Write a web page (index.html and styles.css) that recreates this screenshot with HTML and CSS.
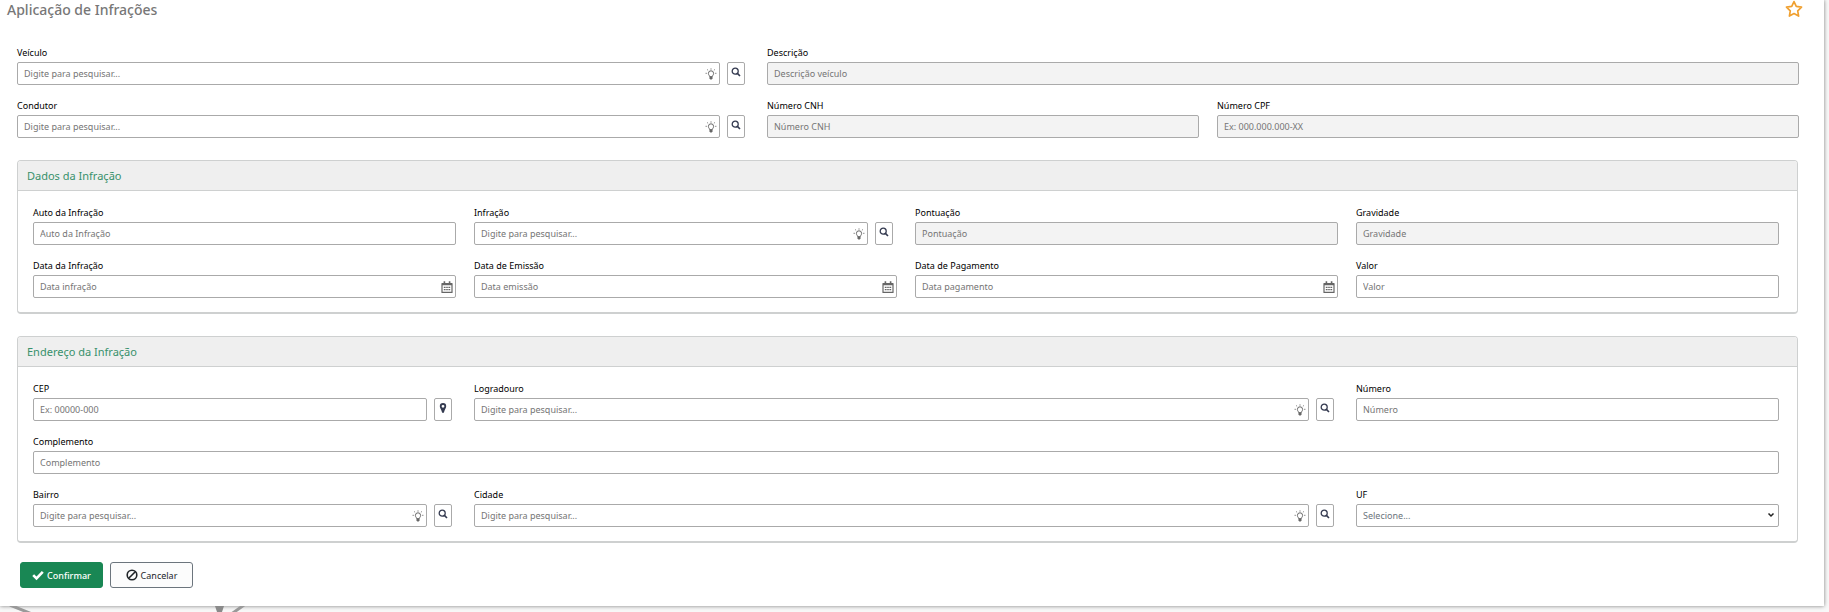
FILE: index.html
```
<!DOCTYPE html>
<html lang="pt-BR">
<head>
<meta charset="utf-8">
<title>Aplicação de Infrações</title>
<link rel="stylesheet" href="styles.css">
</head>
<body>
<!-- icons used more than once -->
<svg class="sprite" aria-hidden="true">
  <symbol id="bulb" viewBox="0 0 12 12">
    <path d="M4.6 8.6C4.6 7.4 3.4 7 3.4 5.4a2.6 2.6 0 0 1 5.2 0c0 1.600-1.200 2-1.200 3.200z" fill="none" stroke="currentColor" stroke-width="1"/>
    <path d="M4.500 9h3v1.600l-.8.9H5.300l-.8-.9z" fill="currentColor"/>
    <path d="M6 .4v1.200M2.200 1.500l.9.9M9.800 1.500l-.9.900M.6 5.300h1.200M10.200 5.300h1.200" stroke="currentColor" stroke-width=".9"/>
  </symbol>
  <symbol id="search" viewBox="0 0 10 10">
    <circle cx="4.200" cy="4.200" r="3" fill="none" stroke="currentColor" stroke-width="1.300"/>
    <path d="M6.400 6.400l2.600 2.600" stroke="currentColor" stroke-width="1.600"/>
  </symbol>
  <symbol id="calendar" viewBox="0 0 12 12">
    <path d="M1 2.500h10v8.900H1z" fill="none" stroke="currentColor" stroke-width="1.200" stroke-linejoin="round"/>
    <path d="M1 2h10v2.200H1zM2.600.2h1.600v2.600H2.600zM7.800.2h1.600v2.600H7.800z" fill="currentColor"/>
    <path d="M2.800 6.400h6.400M2.800 8.600h6.400" stroke="currentColor" stroke-width="1.300" stroke-dasharray="1.300 .4"/>
  </symbol>
</svg>

<main class="card">
  <header class="page-header">
    <h1>Aplicação de Infrações</h1>
    <button class="favorite" type="button" aria-label="Favoritar">
      <svg viewBox="0 0 16 16"><path d="M8 1.400l2 4.300 4.700.6-3.400 3.300.8 4.700L8 12l-4.100 2.300.8-4.700L1.300 6.300 6 5.700z" fill="none" stroke="currentColor" stroke-width="1.500" stroke-linejoin="round"/></svg>
    </button>
  </header>

  <form>
    <div class="row top">
      <div class="field c5">
        <label for="veiculo">Veículo</label>
        <div class="lookup">
          <div class="control"><input id="veiculo" type="text" placeholder="Digite para pesquisar..."><svg><use href="#bulb"/></svg></div>
          <button type="button" aria-label="Pesquisar veículo"><svg><use href="#search"/></svg></button>
        </div>
      </div>
      <div class="field c7">
        <label for="descricao">Descrição</label>
        <input id="descricao" type="text" placeholder="Descrição veículo" disabled>
      </div>
      <div class="field c5">
        <label for="condutor">Condutor</label>
        <div class="lookup">
          <div class="control"><input id="condutor" type="text" placeholder="Digite para pesquisar..."><svg><use href="#bulb"/></svg></div>
          <button type="button" aria-label="Pesquisar condutor"><svg><use href="#search"/></svg></button>
        </div>
      </div>
      <div class="field c3">
        <label for="cnh">Número CNH</label>
        <input id="cnh" type="text" placeholder="Número CNH" disabled>
      </div>
      <div class="field c4">
        <label for="cpf">Número CPF</label>
        <input id="cpf" type="text" placeholder="Ex: 000.000.000-XX" disabled>
      </div>
    </div>

    <section class="panel">
      <h2>Dados da Infração</h2>
      <div class="row">
        <div class="field c3">
          <label for="auto">Auto da Infração</label>
          <input id="auto" type="text" placeholder="Auto da Infração">
        </div>
        <div class="field c3">
          <label for="infracao">Infração</label>
          <div class="lookup">
            <div class="control"><input id="infracao" type="text" placeholder="Digite para pesquisar..."><svg><use href="#bulb"/></svg></div>
            <button type="button" aria-label="Pesquisar infração"><svg><use href="#search"/></svg></button>
          </div>
        </div>
        <div class="field c3">
          <label for="pontuacao">Pontuação</label>
          <input id="pontuacao" type="text" placeholder="Pontuação" disabled>
        </div>
        <div class="field c3">
          <label for="gravidade">Gravidade</label>
          <input id="gravidade" type="text" placeholder="Gravidade" disabled>
        </div>
        <div class="field c3">
          <label for="data-infracao">Data da Infração</label>
          <div class="control date"><input id="data-infracao" type="text" placeholder="Data infração"><svg><use href="#calendar"/></svg></div>
        </div>
        <div class="field c3">
          <label for="data-emissao">Data de Emissão</label>
          <div class="control date"><input id="data-emissao" type="text" placeholder="Data emissão"><svg><use href="#calendar"/></svg></div>
        </div>
        <div class="field c3">
          <label for="data-pagamento">Data de Pagamento</label>
          <div class="control date"><input id="data-pagamento" type="text" placeholder="Data pagamento"><svg><use href="#calendar"/></svg></div>
        </div>
        <div class="field c3">
          <label for="valor">Valor</label>
          <input id="valor" type="text" placeholder="Valor">
        </div>
      </div>
    </section>

    <section class="panel">
      <h2>Endereço da Infração</h2>
      <div class="row">
        <div class="field c3">
          <label for="cep">CEP</label>
          <div class="lookup">
            <div class="control"><input id="cep" type="text" placeholder="Ex: 00000-000"></div>
            <button type="button" aria-label="Localizar CEP"><svg viewBox="0 0 10 10"><path d="M5 0a3.200 3.200 0 0 1 3.200 3.200C8.200 5 6.800 6 6 9.200c-.3 1-1.700 1-2 0C3.200 6 1.800 5 1.800 3.200A3.200 3.200 0 0 1 5 0zm0 1.900a1.400 1.400 0 1 0 0 2.800 1.400 1.400 0 0 0 0-2.800z" fill="currentColor"/></svg></button>
          </div>
        </div>
        <div class="field c6">
          <label for="logradouro">Logradouro</label>
          <div class="lookup">
            <div class="control"><input id="logradouro" type="text" placeholder="Digite para pesquisar..."><svg><use href="#bulb"/></svg></div>
            <button type="button" aria-label="Pesquisar logradouro"><svg><use href="#search"/></svg></button>
          </div>
        </div>
        <div class="field c3">
          <label for="numero">Número</label>
          <input id="numero" type="text" placeholder="Número">
        </div>
        <div class="field c12">
          <label for="complemento">Complemento</label>
          <input id="complemento" type="text" placeholder="Complemento">
        </div>
        <div class="field c3">
          <label for="bairro">Bairro</label>
          <div class="lookup">
            <div class="control"><input id="bairro" type="text" placeholder="Digite para pesquisar..."><svg><use href="#bulb"/></svg></div>
            <button type="button" aria-label="Pesquisar bairro"><svg><use href="#search"/></svg></button>
          </div>
        </div>
        <div class="field c6">
          <label for="cidade">Cidade</label>
          <div class="lookup">
            <div class="control"><input id="cidade" type="text" placeholder="Digite para pesquisar..."><svg><use href="#bulb"/></svg></div>
            <button type="button" aria-label="Pesquisar cidade"><svg><use href="#search"/></svg></button>
          </div>
        </div>
        <div class="field c3">
          <label for="uf">UF</label>
          <div class="control select">
            <select id="uf"><option>Selecione...</option></select>
            <svg viewBox="0 0 8 8"><path d="M1.500 2.500L4 5l2.500-2.500" fill="none" stroke="currentColor" stroke-width="1.500"/></svg>
          </div>
        </div>
      </div>
    </section>

    <div class="actions">
      <button class="btn confirm" type="submit"><svg viewBox="0 0 12 12"><path d="M1.200 6.200l3.300 3.300 6.300-6.600" fill="none" stroke="currentColor" stroke-width="2.600"/></svg>Confirmar</button>
      <button class="btn cancel" type="button"><svg viewBox="0 0 12 12"><circle cx="6" cy="6" r="4.800" fill="none" stroke="currentColor" stroke-width="1.600"/><path d="M2.700 9.300l6.600-6.600" stroke="currentColor" stroke-width="1.600"/></svg>Cancelar</button>
    </div>
  </form>
</main>

<svg class="backdrop" viewBox="0 0 260 6" aria-hidden="true">
  <path d="M10 -1l22 9M244 -1l-14 10" fill="none" stroke="#999" stroke-width="3"/>
  <path d="M215 0h9l-2 6h-5z" fill="#8a8a8a"/>
</svg>
</body>
</html>
```

FILE: styles.css
```
*{box-sizing:border-box;}
body{margin:0; padding:0 5px 0 0; background:#f8f8f8; color:#000; font-family:"Noto Sans", "Open Sans", sans-serif; font-size:9px; overflow-x:hidden;}
h1, h2{margin:0; font-weight:500;}
input, select, button{font-family:inherit; font-size:inherit;}
svg{display:block;}
.sprite{display:none;}

.card{padding-bottom:18px; background:#fff; box-shadow:0 0 4px rgba(0,0,0,.5);}

/* header */
.page-header{display:flex; justify-content:space-between; height:40px; padding:0 21px 0 7px;}
.page-header h1{color:#777; font-size:14px; line-height:20px;}
.favorite{width:18px; height:18px; padding:0; border:0; background:none; color:#f0a030; cursor:pointer;}
.favorite svg{width:18px; height:18px;}

/* form grid */
.row{display:grid; grid-template-columns:repeat(12, 1fr); gap:12px 18px;}
.top{margin:0 25px 22px 17px; padding-top:4px;}
.c3{grid-column:span 3;}
.c4{grid-column:span 4;}
.c5{grid-column:span 5;}
.c6{grid-column:span 6;}
.c7{grid-column:span 7;}
.c12{grid-column:span 12;}

.field{min-width:0;}
.field label{display:block; height:18px; line-height:18px;}
.field input, .field select{display:block; width:100%; height:23px; padding:0 6px; border:1px solid #aaa; border-radius:2px; background:#fff; color:#6c757d;}
.field input::placeholder{color:#757575; opacity:1;}
.field input:disabled{background:#f3f3f3;}
.field select{appearance:none;}

.control{position:relative; flex:1;}
.control svg{position:absolute; top:6px; right:3px; width:12px; height:12px; color:#666; pointer-events:none;}
.control.select svg{top:7px; right:4px; width:8px; height:8px; color:#222;}

.lookup{display:flex; gap:7px; padding-right:4px;}
.lookup button{display:flex; justify-content:center; width:18px; height:23px; padding:4px 0 0; border:1px solid #aaa; border-radius:2px; background:#fff; color:#343a50; cursor:pointer;}
.lookup button svg{width:10px; height:10px;}

/* panels */
.panel{margin:0 26px 22px 17px; border:1px solid #ced0d0; border-bottom-width:2px; border-radius:4px;}
.panel h2{height:30px; padding-left:9px; border-bottom:1px solid #ced0d0; border-radius:3px 3px 0 0; background:#efefef; color:#38916c; font-size:11px; font-weight:400; line-height:30px;}
.panel .row{padding:13px 18px 14px 15px;}

/* buttons */
.actions{display:flex; gap:7px; margin:-3px 0 0 20px;}
.btn{display:flex; align-items:center; justify-content:center; gap:3px; width:83px; height:26px; padding:0; border:1px solid #6c757d; border-radius:3px; background:#fcfcfc; color:#212529; cursor:pointer;}
.btn svg{width:12px; height:12px;}
.confirm{border-color:#198754; background:#198754; color:#fff; font-weight:500;}

.backdrop{width:260px; height:6px;}
```
